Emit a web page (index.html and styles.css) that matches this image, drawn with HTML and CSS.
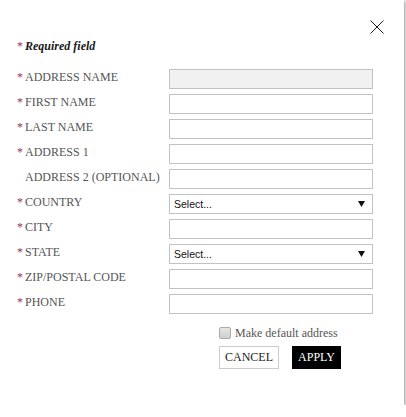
FILE: index.html
```html
<!DOCTYPE html>
<html>
<head>
<meta charset="utf-8">
<link rel="stylesheet" href="styles.css">
</head>
<body>
<div class="modal">
  <div class="modal-head">
    <button class="close" aria-label="Close">
      <svg width="14" height="14" viewBox="0 0 14 14"><path d="M0.5 0.5 L13.5 13.5 M13.5 0.5 L0.5 13.5" stroke="#1a1a1a" stroke-width="1" fill="none"/></svg>
    </button>
  </div>
  <p class="required-note"><span class="req">*</span>Required field</p>
  <form class="form">
    <label class="lbl"><span class="req">*</span>ADDRESS NAME</label>
    <div class="field disabled"></div>
    <label class="lbl"><span class="req">*</span>FIRST NAME</label>
    <div class="field"></div>
    <label class="lbl"><span class="req">*</span>LAST NAME</label>
    <div class="field"></div>
    <label class="lbl"><span class="req">*</span>ADDRESS 1</label>
    <div class="field"></div>
    <label class="lbl"><span class="req"></span>ADDRESS 2 (OPTIONAL)</label>
    <div class="field"></div>
    <label class="lbl"><span class="req">*</span>COUNTRY</label>
    <div class="field select"><span>Select...</span><svg width="7" height="6" viewBox="0 0 7 6"><path d="M0 0 H7 L3.5 6 Z" fill="#111"/></svg></div>
    <label class="lbl"><span class="req">*</span>CITY</label>
    <div class="field"></div>
    <label class="lbl"><span class="req">*</span>STATE</label>
    <div class="field select"><span>Select...</span><svg width="7" height="6" viewBox="0 0 7 6"><path d="M0 0 H7 L3.5 6 Z" fill="#111"/></svg></div>
    <label class="lbl"><span class="req">*</span>ZIP/POSTAL CODE</label>
    <div class="field"></div>
    <label class="lbl"><span class="req">*</span>PHONE</label>
    <div class="field"></div>
    <div class="actions">
      <div class="check-row"><span class="checkbox"></span><span class="check-text">Make default address</span></div>
      <div class="buttons">
        <button type="button" class="btn cancel">CANCEL</button>
        <button type="button" class="btn apply">APPLY</button>
      </div>
    </div>
  </form>
</div>
</body>
</html>
```
FILE: styles.css
```css
html, body {
  margin: 0;
  padding: 0;
  background: #fff;
}
.modal {
  width: 404px;
  height: 405px;
  box-sizing: border-box;
  padding: 20px 0 0 17px;
  background: #fff;
  box-shadow: 1px 1px 3px rgba(0,0,0,0.45);
  font-family: "Liberation Serif", serif;
}
.modal-head {
  display: flex;
  justify-content: flex-end;
  height: 14px;
  padding-right: 20px;
}
.close {
  border: 0;
  padding: 0;
  margin: 0;
  background: none;
  width: 14px;
  height: 14px;
  display: block;
}
.close svg { display: block; }
.required-note {
  margin: 5px 0 0 0;
  font-size: 12px;
  line-height: 14px;
  font-style: italic;
  font-weight: bold;
  color: #1a1a1a;
}
.req {
  display: inline-block;
  width: 8px;
  color: #9a3358;
  font-style: normal;
  font-weight: normal;
}
.form {
  display: grid;
  grid-template-columns: 152px 204px;
  row-gap: 5px;
  margin: 16px 0 0 0;
}
.lbl {
  font-size: 12px;
  line-height: 17px;
  color: #555;
  white-space: nowrap;
}
.field {
  height: 20px;
  box-sizing: border-box;
  border: 1px solid #c2c2c2;
  background: #fff;
}
.field.disabled {
  background: #f1f1f1;
}
.select {
  display: flex;
  align-items: center;
  justify-content: space-between;
  padding: 0 7px 0 4px;
  font-family: "Liberation Sans", sans-serif;
  font-size: 10.5px;
  color: #111;
}
.select svg { display: block; }
.actions {
  grid-column: 2;
  padding-left: 50px;
  margin-top: 7px;
}
.check-row {
  display: flex;
  align-items: center;
  gap: 4px;
  height: 14px;
}
.checkbox {
  width: 10px;
  height: 10px;
  border: 1px solid #aaa;
  border-radius: 2px;
  background: linear-gradient(#e6e6e6, #cfcfcf);
}
.check-text {
  font-size: 12px;
  color: #555;
}
.buttons {
  display: flex;
  gap: 13px;
  margin-top: 6px;
}
.btn {
  font-family: "Liberation Serif", serif;
  font-size: 12px;
  height: 23px;
  line-height: 21px;
  margin: 0;
  border: 1px solid #ccc;
  cursor: pointer;
}
.cancel {
  width: 60px;
  padding: 0;
  background: #fff;
  color: #222;
}
.apply {
  width: 49px;
  padding: 0;
  background: #000;
  border-color: #000;
  color: #fff;
}
```
